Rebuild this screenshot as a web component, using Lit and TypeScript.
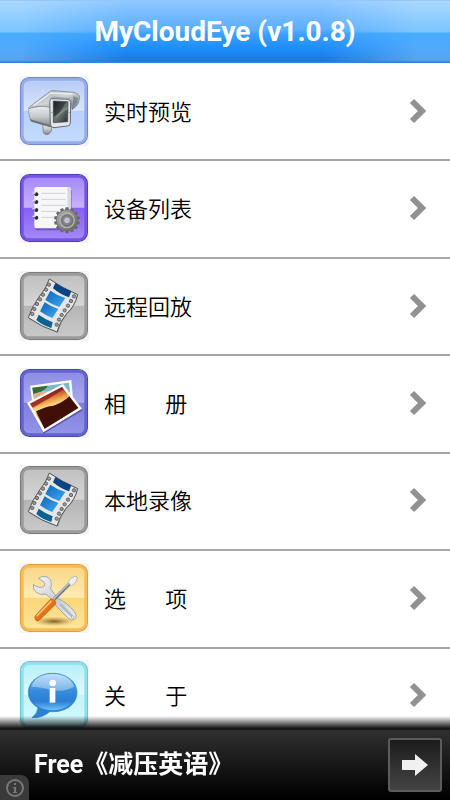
import { LitElement, html, css, svg } from "lit";
import { customElement, property } from "lit/decorators.js";

type IconName = "camera" | "list" | "film" | "photos" | "tools" | "info";

const tiles: Record<IconName, { edge: string; rim: string; top: string; mid: string; low: string; end: string }> = {
  camera: { edge: "#7389d6", rim: "#96abe8", top: "#b4c8f6", mid: "#d8e6fc", low: "#b8d0fa", end: "#c4dcfc" },
  list: { edge: "#5a3bc6", rim: "#7355e2", top: "#a184f6", mid: "#c6b2ff", low: "#8560f4", end: "#a78cfa" },
  film: { edge: "#7e7e7e", rim: "#9a9a9a", top: "#bebebe", mid: "#d6d6d6", low: "#b5b5b5", end: "#cbcbcb" },
  photos: { edge: "#4c4bb0", rim: "#6463cc", top: "#8b8ae0", mid: "#a9a9f0", low: "#7f7edc", end: "#9695ea" },
  tools: { edge: "#e2a035", rim: "#f5bd55", top: "#fbd585", mid: "#fdebb4", low: "#fbd679", end: "#fde69c" },
  info: { edge: "#70c8d6", rim: "#8ee0ec", top: "#b4eef6", mid: "#e0fafd", low: "#c4f3fa", end: "#d4fbff" },
};

const gearTeeth = Array.from({ length: 14 }, (_, i) => (i * 360) / 14);

const filmHoles = [
  [117, 59], [108, 74], [99, 89], [90, 103], [81, 117], [73, 132], [67, 147],
  [192, 94], [183, 108], [174, 122], [164, 136], [155, 150], [147, 164], [140, 179],
];

const art = {
  camera: svg`
    <defs>
      <linearGradient id="body" x1="0" y1="0" x2="0" y2="1">
        <stop offset="0" stop-color="#f2f4f4"/><stop offset=".55" stop-color="#c3c8cb"/><stop offset="1" stop-color="#7d8488"/>
      </linearGradient>
      <linearGradient id="hood" x1="0" y1="0" x2="1" y2="1">
        <stop offset="0" stop-color="#a0a6aa"/><stop offset=".5" stop-color="#cfd4d6"/><stop offset="1" stop-color="#68727a"/>
      </linearGradient>
      <linearGradient id="lens" x1="0" y1="0" x2="1" y2="1">
        <stop offset="0" stop-color="#1a1f20"/><stop offset=".45" stop-color="#3c4445"/><stop offset=".5" stop-color="#6d7676"/><stop offset="1" stop-color="#252b2c"/>
      </linearGradient>
    </defs>
    <path d="M98 158 L100 188 Q108 198 118 191 L124 183 L125 166 Z" fill="url(#body)" stroke="#6d747a" stroke-width="2"/>
    <path d="M57 114 Q54 124 58 136 L61 149 L122 170 L124 104 Z" fill="url(#body)" stroke="#7c848a" stroke-width="2"/>
    <path d="M59 148 L122 166 L122 172 L64 155 Z" fill="#6a7175"/>
    <path d="M119 90 Q122 84 132 86 L174 88 Q182 90 182 98 L181 160 Q180 168 172 168 L132 173 Q122 173 121 162 Z" fill="#e3e7e8" stroke="#646c70" stroke-width="3"/>
    <path d="M130 93 L174 95 L173 155 L130 158 Z" fill="url(#lens)" stroke="#3c4344" stroke-width="2"/>
    <path d="M131 141 L173 108 L173 116 L131 150 Z" fill="#8b9391" opacity=".65"/>
    <path d="M56 113 L118 66 Q124 60 134 62 L190 67 Q208 71 209 82 L205 99 Q200 110 186 119 L183 92 Q180 86 170 85 L132 81 Q121 82 119 94 L119 112 Q86 104 58 115 Z" fill="url(#hood)" stroke="#71787e" stroke-width="2"/>
    <path d="M70 107 L122 69 L188 72" fill="none" stroke="#ffffff" stroke-width="4" opacity=".65"/>
    <path d="M190 78 L204 84 L199 98 L188 110 Z" fill="#687176" opacity=".6"/>
    <circle cx="126" cy="128" r="2" fill="#8d9498"/><circle cx="178" cy="127" r="2" fill="#8d9498"/>`,
  list: svg`
    <defs>
      <linearGradient id="gear" x1="0" y1="0" x2="1" y2="1">
        <stop offset="0" stop-color="#b0b0b0"/><stop offset="1" stop-color="#606060"/>
      </linearGradient>
    </defs>
    <rect x="76" y="66" width="109" height="124" rx="8" fill="#40208c" opacity=".45"/>
    <rect x="73" y="60" width="110" height="124" rx="8" fill="#f7f7f9"/>
    <path d="M172 61 Q183 61 183 70 L183 176 L173 184 Z" fill="#d8d8e2"/>
    <path d="M94 79H166M94 97H166M94 115H166M94 133H142M94 151H134" stroke="#d2d2d6" stroke-width="3"/>
    ${[82, 105, 129, 152].map(y => svg`<circle cx="79" cy=${y} r="6" fill="#2f2f33"/><path d=${`M67 ${y - 4}h10`} stroke="#d9d9e3" stroke-width="4"/>`)}
    ${gearTeeth.map(a => svg`<path d="M164 132 L167 121 H175 L178 132 Z" fill="#6a6a6a" transform=${`rotate(${a} 171 160)`}/>`)}
    <circle cx="171" cy="160" r="32" fill="url(#gear)" stroke="#6a6a6a" stroke-width="2"/>
    <circle cx="171" cy="160" r="22" fill="none" stroke="#b4b4b4" stroke-width="4"/>
    <circle cx="171" cy="160" r="16" fill="#858585" stroke="#666" stroke-width="2"/>
    <circle cx="171" cy="160" r="10" fill="#c4bcda" stroke="#777" stroke-width="2"/>`,
  film: svg`
    <defs>
      <linearGradient id="frame" x1="0" y1="0" x2="1" y2="1">
        <stop offset="0" stop-color="#0c66b8"/><stop offset="1" stop-color="#42a9f2"/>
      </linearGradient>
    </defs>
    <path d="M121 46 Q160 75 205 88 Q194 127 171 148 Q151 175 145 203 Q100 190 57 162 Q67 126 89 98 Q110 72 121 46 Z" fill="#777" opacity=".45"/>
    <path d="M118 42 Q158 70 203 89 Q194 125 169 147 Q148 172 141 201 Q96 187 55 158 Q66 124 87 96 Q109 70 118 42 Z" fill="#e6e6e6" stroke="#4f5354" stroke-width="3"/>
    <path d="M136 54 Q158 68 184 79 L177 97 Q150 88 129 70 Z" fill="#0a4482"/>
    <path d="M121 77 Q142 92 166 99 L148 126 Q126 119 106 105 Z" fill="url(#frame)"/>
    <path d="M104 112 Q121 124 145 132 L127 159 Q109 153 90 139 Z" fill="url(#frame)"/>
    <path d="M86 149 Q106 163 128 172 L124 189 Q99 182 79 165 Z" fill="#086394"/>
    ${filmHoles.map(([x, y]) => svg`<circle cx=${x} cy=${y} r="5" fill="#999" stroke="#666" stroke-width="3"/>`)}`,
  photos: svg`
    <defs>
      <linearGradient id="sky" x1=".2" y1="0" x2=".55" y2="1">
        <stop offset="0" stop-color="#871c20"/><stop offset=".2" stop-color="#b34425"/><stop offset=".36" stop-color="#f1a04b"/><stop offset=".5" stop-color="#ffea94"/><stop offset=".62" stop-color="#d58a41"/>
      </linearGradient>
    </defs>
    <path d="M62 75 L182 57 L190 150 L76 170 Z" fill="#3b3a90" opacity=".4"/>
    <path d="M60 71 L184 54 L191 132 L72 158 Z" fill="#fbfbfb"/>
    <path d="M67 77 L177 62 L183 118 L76 140 Z" fill="#78b8c8"/>
    <path d="M67 77 L113 71 Q109 83 83 93 L70 97 Z" fill="#376a39"/>
    <path d="M70 96 Q106 82 143 86 L128 108 L74 123 Z" fill="#d8b48a"/>
    <path d="M55 127 L161 70 L218 145 L101 215 Z" fill="#35347e" opacity=".6"/>
    <path d="M51 122 L159 66 L216 140 L100 211 Z" fill="#fff"/>
    <path d="M60 125 L156 75 L205 138 L104 200 Z" fill="url(#sky)"/>
    <path d="M60 125 L156 75 L161 81 Q128 104 68 137 Z" fill="#8a1a20" opacity=".75"/>
    <path d="M78 148 Q107 133 130 131 Q160 121 178 103 L205 138 L104 200 Z" fill="#401008"/>`,
  tools: svg`
    <defs>
      <linearGradient id="steel" x1="0" y1="0" x2="1" y2="1">
        <stop offset="0" stop-color="#fafafa"/><stop offset=".55" stop-color="#c9ccd0"/><stop offset="1" stop-color="#f0f0f0"/>
      </linearGradient>
      <linearGradient id="grip" x1="0" y1="0" x2="1" y2="1">
        <stop offset="0" stop-color="#ffb347"/><stop offset=".5" stop-color="#e6761a"/><stop offset="1" stop-color="#b54a0b"/>
      </linearGradient>
      <radialGradient id="shade"><stop offset="0" stop-color="#5a4010" stop-opacity=".8"/><stop offset="1" stop-color="#a87b24" stop-opacity="0"/></radialGradient>
    </defs>
    <g transform="translate(0 3)">
      <ellipse cx="132" cy="190" rx="62" ry="14" fill="url(#shade)"/>
      <path d="M85 61 Q96 53 109 56 Q124 61 124 80 L122 93 L143 121 Q172 134 193 161 Q203 175 194 184 Q185 190 174 180 L142 148 Q133 140 131 130 L108 108 Q91 113 79 103 Q69 95 70 80 L86 88 Q96 90 103 84 Q107 76 101 71 Z" fill="url(#steel)" stroke="#a4a8ac" stroke-width="3"/>
      <path d="M152 140 L184 172" stroke="#b4b8bc" stroke-width="7" stroke-linecap="round"/>
      <circle cx="188" cy="177" r="4" fill="#fdf3d2" stroke="#989ca0" stroke-width="2"/>
      <path d="M133 123 L180 76" stroke="#74797d" stroke-width="10"/>
      <path d="M131 122 L179 74" stroke="#c4c8cc" stroke-width="4"/>
      <path d="M173 72 L183 60 L198 54 L202 62 L196 74 L184 84 Z" fill="#eceeef" stroke="#a4a8ac" stroke-width="2"/>
      <path d="M122 123 Q130 120 138 131 L136 139 L88 187 Q80 192 75 183 Q72 177 78 171 Z" fill="url(#grip)" stroke="#b85a16" stroke-width="2"/>
      <path d="M124 129 L80 175" stroke="#ffcd7b" stroke-width="4"/>
    </g>`,
  info: svg`
    <defs>
      <linearGradient id="bubble" x1="0" y1="0" x2="0" y2="1">
        <stop offset="0" stop-color="#a0d2f6"/><stop offset=".45" stop-color="#378ede"/><stop offset=".75" stop-color="#2b7ed4"/><stop offset="1" stop-color="#6bc4f6"/>
      </linearGradient>
    </defs>
    <path d="M128 58 C168 58 201 82 201 116 C201 150 168 173 130 173 L119 173 Q99 192 66 191 Q83 177 84 161 C66 150 55 134 55 116 C55 82 88 58 128 58 Z" fill="#2b80d2" stroke="#3288d0" stroke-width="2"/>
    <ellipse cx="128" cy="114" rx="71" ry="55" fill="url(#bubble)"/>
    <path d="M65 98 Q75 61 128 61 Q181 61 191 98 Q160 116 128 108 Q91 99 65 98 Z" fill="#fff" opacity=".35"/>
    <circle cx="128" cy="87" r="10" fill="#fff"/>
    <path d="M119 102H136V146H119Z" fill="#fff"/>`,
};

@customElement("tile-icon")
class TileIcon extends LitElement {
  @property() name: IconName = "camera";

  static styles = css`
    :host { display: block; width: 68px; height: 68px; }
    .art { display: block; width: 100%; height: 100%; overflow: visible; }
  `;

  render() {
    const t = tiles[this.name];
    return html`<svg class="art" viewBox="30 21 204 204" aria-hidden="true">
      <defs>
        <linearGradient id="tile" x1="0" y1="0" x2="0" y2="1">
          <stop offset="0" stop-color=${t.top}/><stop offset=".49" stop-color=${t.mid}/>
          <stop offset=".5" stop-color=${t.low}/><stop offset="1" stop-color=${t.end}/>
        </linearGradient>
      </defs>
      <rect x="27" y="18" width="210" height="210" rx="8" fill="#f5f5f5"/>
      <rect x="32" y="23" width="200" height="200" rx="26" fill="url(#tile)" stroke=${t.edge} stroke-width="4"/>
      <rect x="37" y="28" width="190" height="190" rx="21" fill="none" stroke=${t.rim} stroke-width="8"/>
      ${art[this.name]}
    </svg>`;
  }
}

@customElement("app-root")
class AppRoot extends LitElement {
  static styles = css`
    :host {
      display: block;
      background: #fff;
      color: #000;
      font-family: "Noto Sans CJK SC", "Noto Sans", sans-serif;
    }
    .bar {
      position: relative;
      display: flex;
      align-items: center;
      justify-content: center;
      height: 64px;
      background: linear-gradient(#7fb8f8 0, #a9d8ff 1px, #7cc5ff 32px, #48adff 33px, #50a9fb 48px, #58a2ee 61px, #0878dc 62px, #4a98e4 63px, #fff 63px);
    }
    .glow {
      position: absolute;
      inset: 0 0 1px 0;
      background: linear-gradient(#92c8ff 0, #5aadff 30px, #3da0ff 34px, #1d8dfc 48px, #1b79dc 61px, #3b8ee8 63px);
      mask-image: linear-gradient(90deg, transparent 5%, #000 28%, #000 72%, transparent 92%);
    }
    .title {
      position: relative;
      margin: 0;
      font: 700 28px/32px Roboto, sans-serif;
      color: #fff;
    }
    .menu {
      display: grid;
      grid-auto-rows: 1fr;
      min-height: calc(100vh - 118px);
      margin: 0;
      padding: 0;
      list-style: none;
    }
    .item { display: grid; border-bottom: 2px solid #a8a4a6; }
    .row {
      display: flex;
      align-items: center;
      gap: 16px;
      padding: 10px 22px 12px 20px;
      color: inherit;
      text-decoration: none;
    }
    .label { flex: 1; padding-bottom: 2px; font-size: 22px; font-weight: 350; line-height: 32px; white-space: pre; }
    .chevron { width: 20px; height: 26px; }
    .ad {
      position: fixed;
      inset: auto 0 0 0;
      padding-top: 14px;
      background: linear-gradient(rgba(0, 0, 0, 0), rgba(0, 0, 0, 0.9) 12px, #151515 12px, #151515 14px, #303030 14px, #000 82px);
    }
    .offer {
      display: flex;
      align-items: center;
      justify-content: space-between;
      height: 70px;
      padding: 0 8px 0 34px;
    }
    .pitch {
      font: 700 25px/32px Roboto, "Noto Sans CJK SC", sans-serif;
      color: #fff;
      text-decoration: none;
    }
    .go {
      display: grid;
      place-items: center;
      width: 54px;
      height: 54px;
      padding: 0;
      border: 2px solid #5c5c5c;
      border-radius: 3px;
      background: linear-gradient(#1c1c1c, #444);
    }
    .about {
      position: absolute;
      left: 0;
      bottom: 0;
      display: grid;
      place-items: center;
      width: 29px;
      height: 25px;
      padding: 0;
      border: 0;
      border-radius: 0 8px 0 0;
      background: #3a3a3a;
    }
  `;

  private items: { icon: IconName; label: string }[] = [
    { icon: "camera", label: "实时预览" },
    { icon: "list", label: "设备列表" },
    { icon: "film", label: "远程回放" },
    { icon: "photos", label: "相        册" },
    { icon: "film", label: "本地录像" },
    { icon: "tools", label: "选        项" },
    { icon: "info", label: "关        于" },
  ];

  render() {
    return html`
      <header class="bar">
        <div class="glow"></div>
        <h1 class="title">MyCloudEye (v1.0.8)</h1>
      </header>
      <ul class="menu">
        ${this.items.map(item => html`
          <li class="item">
            <a class="row" href="#">
              <tile-icon name=${item.icon}></tile-icon>
              <span class="label">${item.label}</span>
              <svg class="chevron" viewBox="0 0 20 26" aria-hidden="true">
                <path d="M4 3 L14 13 L4 23" fill="none" stroke="#919191" stroke-width="6"/>
              </svg>
            </a>
          </li>`)}
      </ul>
      <aside class="ad">
        <div class="offer">
          <a class="pitch" href="#">Free《减压英语》</a>
          <button class="go" aria-label="Open">
            <svg width="28" height="24" viewBox="0 0 28 24" aria-hidden="true">
              <path d="M1 7H14V1L27 12L14 23V17H1Z" fill="#f0f0f0"/>
            </svg>
          </button>
        </div>
        <button class="about" aria-label="About this ad">
          <svg width="20" height="20" viewBox="0 0 20 20" aria-hidden="true">
            <circle cx="10" cy="10" r="8" fill="none" stroke="#777" stroke-width="2"/>
            <path d="M9 5h2v2H9zM8 9h3v5h1v1H8v-1h1v-4H8z" fill="#777"/>
          </svg>
        </button>
      </aside>
    `;
  }
}
